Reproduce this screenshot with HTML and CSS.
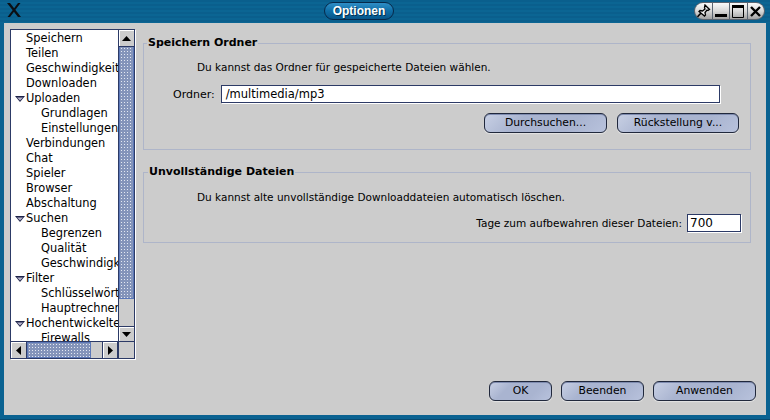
FILE: index.html
```html
<!DOCTYPE html>
<html lang="de">
<head>
<meta charset="utf-8">
<title>Optionen</title>
<link rel="stylesheet" href="styles.css">
</head>
<body>
<div class="window">
  <header class="titlebar">
    <svg class="xlogo" width="16" height="16" viewBox="0 0 16 16"><path d="M1 1h3l11 14h-3zM12 1h2.500L4 15H1.500z" fill="#0b0f14"/></svg>
    <div class="title-wrap"><span class="title">Optionen</span></div>
    <div class="wm-buttons">
      <span class="wm-btn"><svg width="16" height="15" viewBox="0 0 16 15"><path d="M1 14.500L6 9" stroke="#000" stroke-width="1.600" fill="none"/><path d="M10 1l4.500 4.500-1.500 1-1-.5-2 2.500.5 2.500-1 1L4 7.500l1-1 2.500.5L10 5 9.500 3.500z" fill="#f0f0f0" stroke="#000" stroke-width="1.300"/></svg></span>
      <span class="wm-btn"><svg width="16" height="15" viewBox="0 0 16 15"><rect x="2" y="10" width="12" height="3" fill="#000"/></svg></span>
      <span class="wm-btn"><svg width="16" height="15" viewBox="0 0 16 15"><path d="M2.500 1.500h11v12h-11z" fill="none" stroke="#000"/><rect x="2" y="1" width="12" height="3" fill="#000"/></svg></span>
      <span class="wm-btn"><svg width="16" height="15" viewBox="0 0 16 15"><path d="M3 3l9 9M12 3l-9 9" stroke="#000" stroke-width="2.400" fill="none"/></svg></span>
    </div>
  </header>
  <div class="content">
    <aside class="tree">
      <div class="tree-top">
        <ul class="rows">
          <li class="row">Speichern</li>
          <li class="row">Teilen</li>
          <li class="row">Geschwindigkeit</li>
          <li class="row">Downloaden</li>
          <li class="row"><svg class="caret" width="10" height="6" viewBox="0 0 10 6"><path d="M0 0h10L5 6z" fill="#1c2248"/><path d="M2 1.500h6L5 4.500z" fill="#b8b4cc"/></svg>Uploaden</li>
          <li class="row sub">Grundlagen</li>
          <li class="row sub">Einstellungen</li>
          <li class="row">Verbindungen</li>
          <li class="row">Chat</li>
          <li class="row">Spieler</li>
          <li class="row">Browser</li>
          <li class="row">Abschaltung</li>
          <li class="row"><svg class="caret" width="10" height="6" viewBox="0 0 10 6"><path d="M0 0h10L5 6z" fill="#1c2248"/><path d="M2 1.500h6L5 4.500z" fill="#b8b4cc"/></svg>Suchen</li>
          <li class="row sub">Begrenzen</li>
          <li class="row sub">Qualität</li>
          <li class="row sub">Geschwindigkeit</li>
          <li class="row"><svg class="caret" width="10" height="6" viewBox="0 0 10 6"><path d="M0 0h10L5 6z" fill="#1c2248"/><path d="M2 1.500h6L5 4.500z" fill="#b8b4cc"/></svg>Filter</li>
          <li class="row sub">Schlüsselwörter</li>
          <li class="row sub">Hauptrechner</li>
          <li class="row"><svg class="caret" width="10" height="6" viewBox="0 0 10 6"><path d="M0 0h10L5 6z" fill="#1c2248"/><path d="M2 1.500h6L5 4.500z" fill="#b8b4cc"/></svg>Hochentwickelte</li>
          <li class="row sub">Firewalls</li>
        </ul>
        <div class="vbar">
          <span class="sb-btn"><svg width="9" height="5" viewBox="0 0 9 5"><path d="M4.500 0L9 5H0z" fill="#000"/></svg></span>
          <span class="thumb-v"></span>
          <span class="track"></span>
          <span class="sb-btn"><svg width="9" height="5" viewBox="0 0 9 5"><path d="M0 0h9L4.500 5z" fill="#000"/></svg></span>
        </div>
      </div>
      <div class="hbar">
        <span class="sb-btn-h"><svg width="5" height="9" viewBox="0 0 5 9"><path d="M5 0v9L0 4.500z" fill="#000"/></svg></span>
        <span class="thumb-h"></span>
        <span class="track-h"></span>
        <span class="sb-btn-h"><svg width="5" height="9" viewBox="0 0 5 9"><path d="M0 0v9l5-4.500z" fill="#000"/></svg></span>
        <span class="corner"></span>
      </div>
    </aside>
    <main class="main">
      <div class="panels">
        <fieldset class="group group-folder">
          <legend class="legend">Speichern Ordner</legend>
          <p class="desc">Du kannst das Ordner für gespeicherte Dateien wählen.</p>
          <div class="folder-row">
            <label class="label label-folder">Ordner:</label>
            <span class="field field-path">/multimedia/mp3</span>
          </div>
          <div class="button-row">
            <span class="btn btn-browse">Durchsuchen...</span>
            <span class="btn btn-reset">Rückstellung v...</span>
          </div>
        </fieldset>
        <fieldset class="group group-partial">
          <legend class="legend legend-partial">Unvollständige Dateien</legend>
          <p class="desc">Du kannst alte unvollständige Downloaddateien automatisch löschen.</p>
          <div class="days-row">
            <label class="label">Tage zum aufbewahren dieser Dateien:</label>
            <span class="field field-days">700</span>
          </div>
        </fieldset>
      </div>
      <footer class="actions">
        <span class="btn btn-ok">OK</span>
        <span class="btn btn-quit">Beenden</span>
        <span class="btn btn-apply">Anwenden</span>
      </footer>
    </main>
  </div>
</div>
</body>
</html>
```

FILE: styles.css
```css
* { box-sizing: border-box; }
html, body { margin: 0; padding: 0; }
body { width: 770px; height: 420px; overflow: hidden; font-family: "DejaVu Sans", sans-serif; font-size: 11px; color: #000; }

.window {
  width: 770px; height: 420px; display: flex; flex-direction: column;
  background: #0a6291; padding: 0 4px 4px 4px;
  border-bottom: 1px solid #084a70;
}
.titlebar {
  height: 23px; flex: none; display: flex; align-items: center; margin: 0 -4px; padding: 0 5px 0 6px;
  background: repeating-linear-gradient(180deg, #0a5f8d 0 2px, #0b6593 2px 4px);
}
.xlogo { flex: none; margin-bottom: 3px; }
.title-wrap { flex: 1; display: flex; justify-content: center; padding-left: 2px; margin-bottom: 2px; }
.title {
  width: 70px; height: 18px; border-radius: 9px; border: 1px solid #06294a; text-align: center;
  background: linear-gradient(180deg, #2f8ec6 0%, #0f6ea6 50%, #07568a 100%);
  color: #fff; font: bold 12px/16px "Liberation Sans", sans-serif;
  text-shadow: 1px 1px 0 #03304f;
}
.wm-buttons {
  display: flex; height: 18px; margin-bottom: 1px; width: 71px; border-radius: 9px; overflow: hidden;
  border: 1px solid #5a6470; background: #5a6470; gap: 1px;
}
.wm-btn { flex: 1; display: flex; align-items: center; justify-content: center; background: linear-gradient(180deg, #fafafa 0%, #d8d8d8 50%, #a2a2a2 100%); }

.content { flex: 1; display: flex; background: #cccccc; padding: 6px 0 0 6px; min-height: 0; }

.tree { width: 125px; height: 330px; flex: none; border: 1px solid #2c3a66; box-shadow: 1px 1px 0 #fff; background: #cccccc; display: flex; flex-direction: column; }
.tree-top { height: 312px; flex: none; display: flex; }
.rows { list-style: none; margin: 0; padding: 1px 0 0; width: 108px; flex: none; height: 312px; background: #fff; overflow: hidden; border-right: 1px solid #2c3a66; border-bottom: 1px solid #2c3a66; }
.row { height: 15px; line-height: 15px; padding-left: 15px; font-size: 11.4px; white-space: nowrap; position: relative; }
.row.sub { padding-left: 30px; }
.caret { position: absolute; left: 4px; top: 5px; }

.vbar { width: 15px; flex: none; display: flex; flex-direction: column; }
.sb-btn { height: 17px; flex: none; background: #cccccc; border-bottom: 1px solid #2c3a66; display: flex; align-items: center; justify-content: center; box-shadow: inset 1px 1px 0 #fff; }
.vbar .sb-btn:last-child { height: 16px; border-top: 1px solid #2c3a66; border-bottom: 1px solid #2c3a66; }
.thumb-v {
  height: 252px; flex: none; border: 1px solid #5c78b8; border-top: 0;
  background-color: #8494ba;
  background-image: radial-gradient(circle, #e4e8f2 0.8px, transparent 1px);
  background-size: 3px 3px;
}
.track { flex: 1; background: #cccccc; }

.hbar { flex: 1; display: flex; }
.sb-btn-h { width: 16px; flex: none; background: #cccccc; border-right: 1px solid #2c3a66; display: flex; align-items: center; justify-content: center; box-shadow: inset 1px 1px 0 #fff; }
.thumb-h {
  width: 64px; flex: none; border: 1px solid #5c78b8;
  background-color: #8494ba;
  background-image: radial-gradient(circle, #e4e8f2 0.8px, transparent 1px);
  background-size: 3px 3px;
}
.track-h { width: 12px; flex: none; background: #cccccc; border-right: 1px solid #2c3a66; }
.hbar .sb-btn-h:nth-child(4) { width: 15px; }
.corner { flex: 1; background: #cccccc; border-left: 1px solid #2c3a66; }

.main { flex: 1; min-width: 0; display: flex; flex-direction: column; padding: 0 9px 0 8px; }
.panels { flex: 1; display: flex; flex-direction: column; gap: 15px; padding: 7px 6px 0 0; }
.group { margin: 0; padding: 0; border: 1px solid #aeb5c9; display: flex; flex-direction: column; min-width: 0; }
.group-folder { height: 114px; }
.group-partial { height: 78px; }
.legend { font-weight: bold; font-size: 11px; line-height: 14px; padding: 0 1px; margin-left: 3px; }
.legend-partial { margin-left: 4px; }
.desc { margin: 0; font-size: 10.5px; line-height: 14px; padding-left: 53px; }
.group-folder .desc { margin-top: 10px; }
.group-partial .desc { margin-top: 11px; }
.folder-row { display: flex; align-items: center; gap: 6px; margin-top: 11px; padding-left: 29px; }
.label { font-size: 10.5px; }
.label-folder { font-size: 11px; }
.field { height: 18px; background: #fff; border: 1px solid #2c3a66; box-shadow: 1px 1px 0 #fff; display: block; }
.field-path { width: 499px; font-size: 11.5px; line-height: 16px; padding-left: 4px; }
.button-row { display: flex; justify-content: flex-end; gap: 10px; margin-top: 10px; padding-right: 11px; }
.days-row { display: flex; align-items: center; justify-content: flex-end; gap: 5px; margin-top: 10px; padding-right: 9px; }
.field-days { width: 54px; font-size: 12px; line-height: 16px; padding-left: 2px; }

.btn {
  display: block; height: 20px; line-height: 18px; text-align: center; font-size: 10.8px; border: 1px solid #20283c; border-radius: 6px;
  background: linear-gradient(135deg, #c8d0e4 0%, #a9b4d0 30%, #a9b4d0 70%, #b8c2dc 100%);
  box-shadow: 0 1px 1px #e4e4e4, inset 0 1px 0 #7f8cb0;
}
.btn-browse { width: 123px; }
.btn-reset { width: 122px; }
.actions { flex: none; display: flex; justify-content: flex-end; gap: 9px; padding-right: 1px; margin-bottom: 14px; }
.btn-ok { width: 63px; }
.btn-quit { width: 83px; }
.btn-apply { width: 103px; }
```
